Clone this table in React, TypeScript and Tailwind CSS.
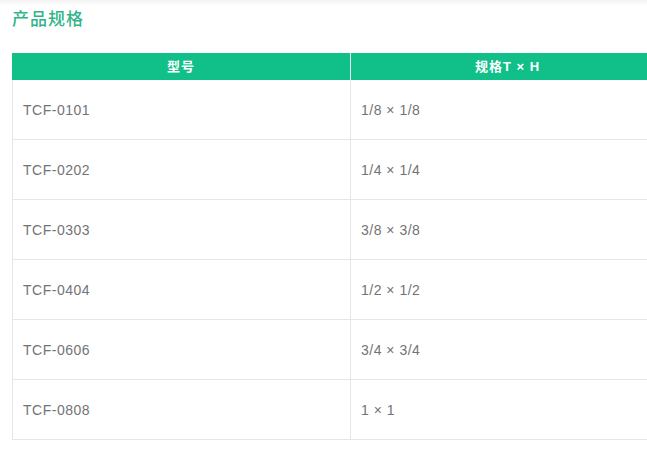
import React from "react";

const rows: [string, string][] = [
  ["TCF-0101", "1/8 × 1/8"],
  ["TCF-0202", "1/4 × 1/4"],
  ["TCF-0303", "3/8 × 3/8"],
  ["TCF-0404", "1/2 × 1/2"],
  ["TCF-0606", "3/4 × 3/4"],
  ["TCF-0808", "1 × 1"],
];

export default function App() {
  return (
    <div
      className="w-[647px] h-[469px] overflow-hidden bg-[linear-gradient(#f3f3f3,#ffffff_6px)] pl-[12px] pt-[7px]"
      style={{ fontFamily: '"Liberation Sans", "Noto Sans CJK SC", sans-serif' }}
    >
      <h2 className="text-[17px] leading-[25px] tracking-[1px] text-[#2fb489] font-medium">
        产品规格
      </h2>
      <div className="mt-[21px] w-[652px]">
        <div className="flex h-[27px] bg-[#10c088] text-white text-[13px] font-bold tracking-[1px]">
          <div className="w-[339px] shrink-0 flex items-center justify-center border-r border-[#e8f8f2]">
            型号
          </div>
          <div className="flex-1 flex items-center justify-center">规格T × H</div>
        </div>
        {rows.map(([a, b]) => (
          <div
            key={a}
            className="flex h-[60px] border-b border-[#e6e6e6] text-[14px] text-[#737373] tracking-[0.5px]"
          >
            <div className="w-[339px] shrink-0 flex items-center border-l border-r border-[#e6e6e6] pl-[10px] pt-[2px]">
              {a}
            </div>
            <div className="flex-1 flex items-center pl-[10px] pt-[2px]">{b}</div>
          </div>
        ))}
      </div>
    </div>
  );
}
